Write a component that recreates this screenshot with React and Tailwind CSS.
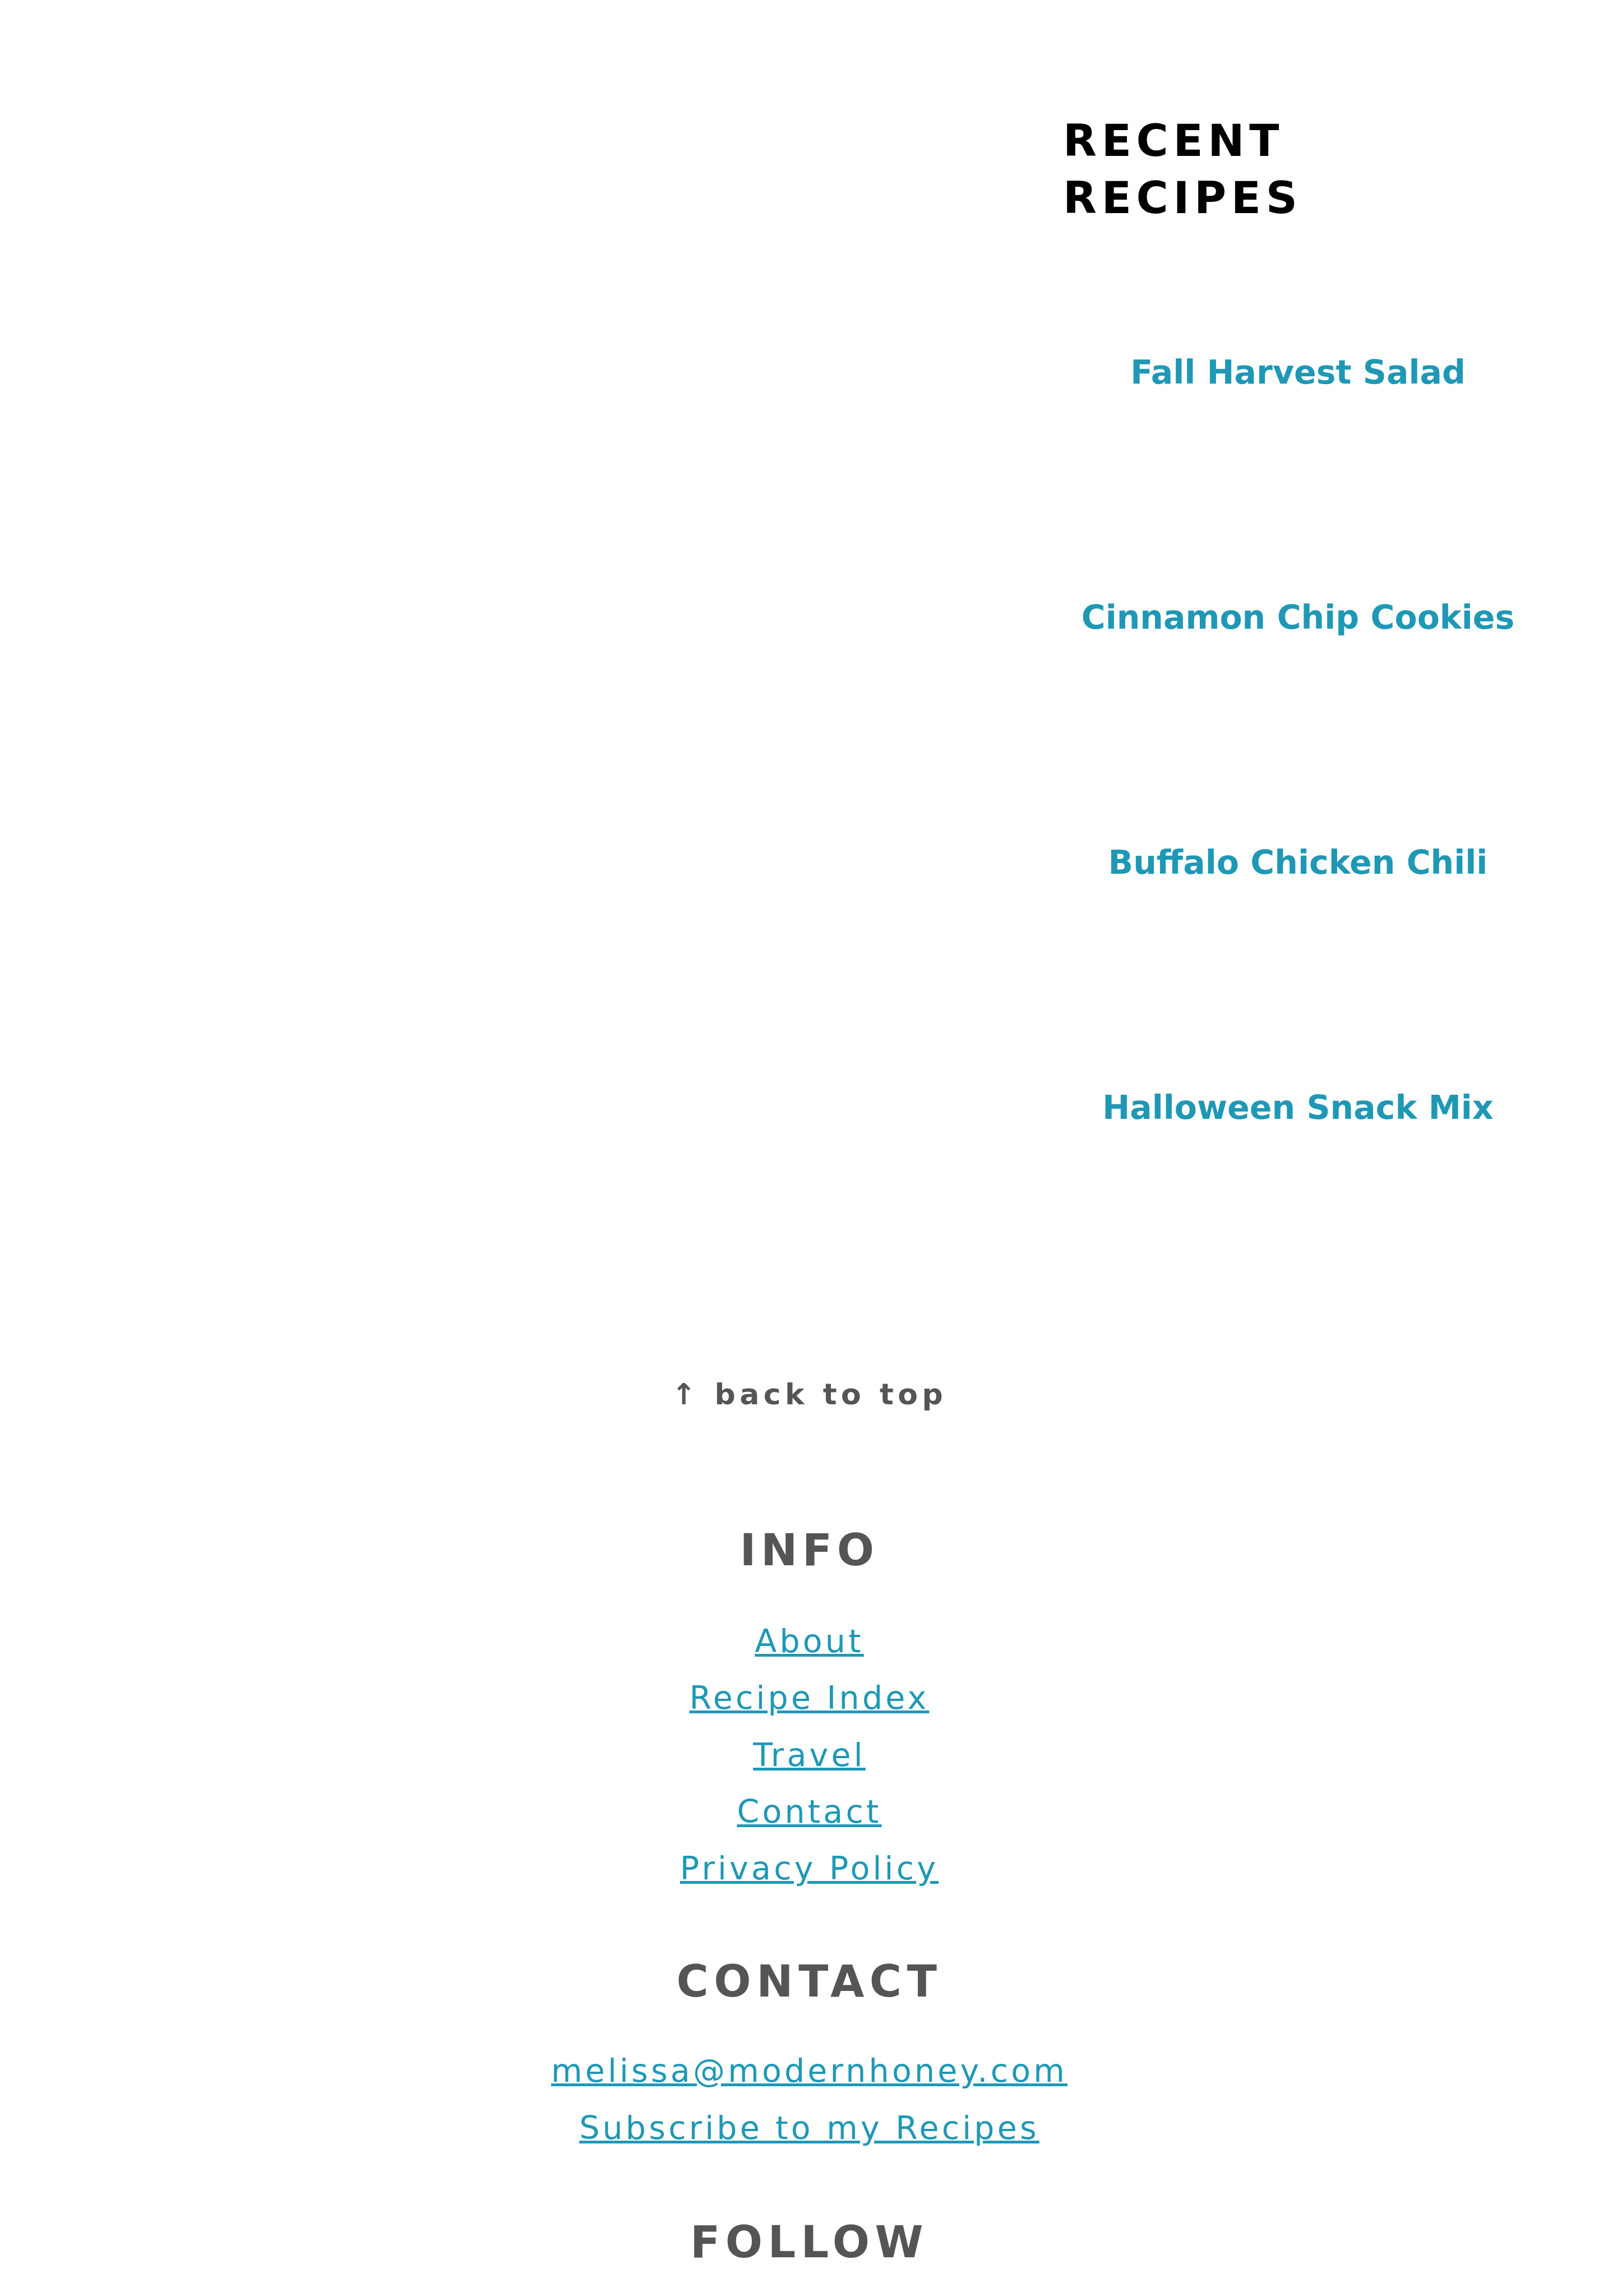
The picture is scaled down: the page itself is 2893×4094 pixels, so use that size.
import React from "react";

const recipes = [
  "Fall Harvest Salad",
  "Cinnamon Chip Cookies",
  "Buffalo Chicken Chili",
  "Halloween Snack Mix",
];

function LinkList({ items, className }) {
  return (
    <ul className={"flex flex-col items-center " + className}>
      {items.map((l) => (
        <li key={l} className="text-[57px] leading-[101.3px] tracking-[5.2px]">
          <a href="#" className="text-[#1f98b6] underline">
            {l}
          </a>
        </li>
      ))}
    </ul>
  );
}

export default function App() {
  return (
    <div className="min-h-screen bg-white font-['DejaVu_Sans',sans-serif]">
      <div className="flex">
        <main className="flex-1" />
        <aside className="w-[838px] mr-[159px] pt-[200px]">
          <h2 className="max-w-[700px] text-[78px] leading-[102px] font-bold tracking-[8.6px] text-black">
            RECENT RECIPES
          </h2>
          <ul className="mt-[217px] flex flex-col">
            {recipes.map((r) => (
              <li key={r} className="h-[437px] flex flex-col text-[58.5px] leading-[86px]">
                <a href="#" className="block text-center font-bold text-[#1f98b6]">
                  {r}
                </a>
              </li>
            ))}
          </ul>
        </aside>
      </div>

      <footer className="flex flex-col items-center text-center pt-[80px] pb-[60px] pr-[6px]">
        <div className="text-[52px] leading-[75px] tracking-[7.5px]">
          <a href="#" className="font-bold text-[#555555]">
            ↑ back to top
          </a>
        </div>

        <section className="mt-[190px] flex flex-col items-center">
          <h3 className="text-[78px] leading-[100px] font-bold tracking-[8.5px] text-[#555555]">
            INFO
          </h3>
          <LinkList
            className="mt-[62px]"
            items={["About", "Recipe Index", "Travel", "Contact", "Privacy Policy"]}
          />
        </section>

        <section className="mt-[101px] flex flex-col items-center">
          <h3 className="text-[78px] leading-[100px] font-bold tracking-[9.6px] text-[#555555]">
            CONTACT
          </h3>
          <LinkList
            className="mt-[59px]"
            items={["melissa@modernhoney.com", "Subscribe to my Recipes"]}
          />
        </section>

        <section className="mt-[103px] flex flex-col items-center">
          <h3 className="text-[78px] leading-[100px] font-bold tracking-[9.4px] text-[#555555]">
            FOLLOW
          </h3>
        </section>
      </footer>
    </div>
  );
}
